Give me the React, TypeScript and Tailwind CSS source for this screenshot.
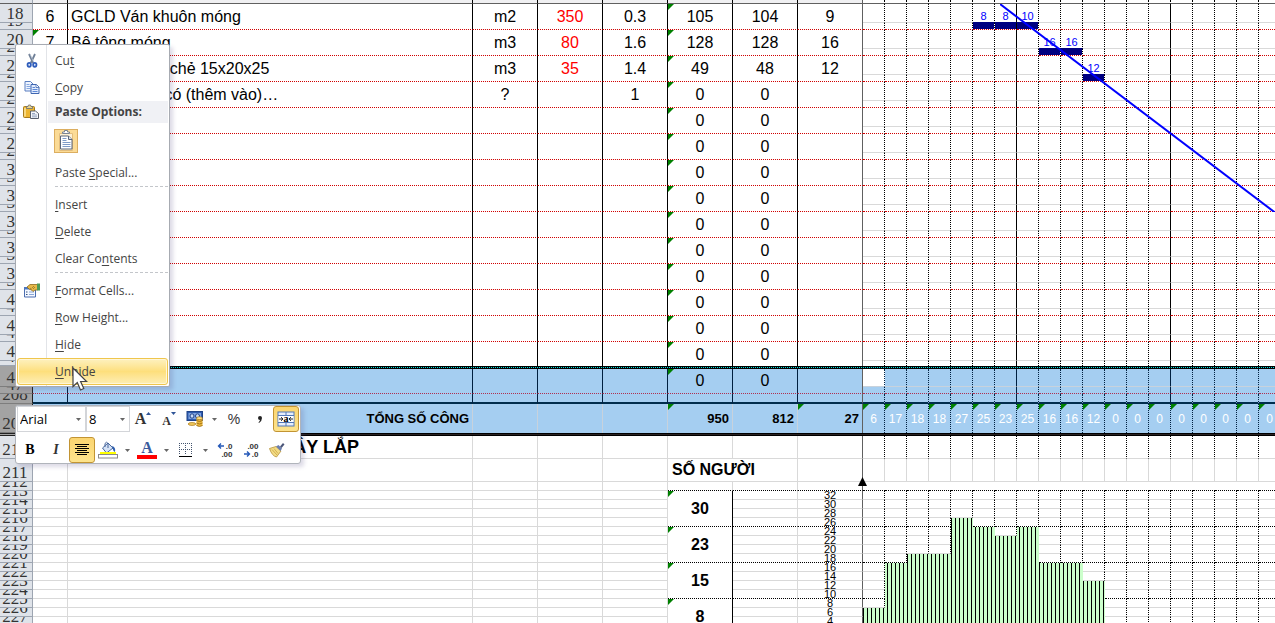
import { ReactNode } from 'react'
import { clsx } from 'clsx'

/* ── Sheet data ── */
type Task = {
  no?: string
  name?: string
  unit?: string
  qty?: string
  rate?: string
  total?: string
  actual?: string
  crew?: string
  start?: number
  bars?: string[]
}

const TASKS: Task[] = [
  { no: '6', name: 'GCLD Ván khuôn móng', unit: 'm2', qty: '350', rate: '0.3', total: '105', actual: '104', crew: '9', start: 5, bars: ['8', '8', '10'] },
  { no: '7', name: 'Bê tông móng', unit: 'm3', qty: '80', rate: '1.6', total: '128', actual: '128', crew: '16', start: 8, bars: ['16', '16'] },
  { no: '8', name: 'Xây móng đá chẻ 15x20x25', unit: 'm3', qty: '35', rate: '1.4', total: '49', actual: '48', crew: '12', start: 10, bars: ['12'] },
  { no: '9', name: 'Công việc gì có (thêm vào)…', unit: '?', rate: '1', total: '0', actual: '0' },
  ...Array.from({ length: 10 }, () => ({ total: '0', actual: '0' })),
]

const DAY_TOTALS = [6, 17, 18, 18, 27, 25, 23, 25, 16, 16, 12, 0, 0, 0, 0, 0, 0, 0, 0]
const DAYS = DAY_TOTALS.map((_, i) => i)

// first filled chart row for each day, counted from the top of the axis
const CHART_TOP = [13, 8, 7, 7, 3, 4, 5, 4, 8, 8, 10]
const CHART_MARKS = ['30', '23', '15', '8']
const CHART_ROWS = Array.from({ length: 16 }, (_, i) => i)

const isWeekEnd = (day: number) => day === 6 || day === 13

/* ── Grid parts ── */
const Corner = () => (
  <span className="absolute left-0 top-0 block size-0 border-r-6 border-t-6 border-r-transparent border-t-[#008000]" />
)

const RowHead = ({ n, h, selected }: { n: number | string; h: string; selected?: boolean }) => (
  <th
    scope="row"
    className={clsx(
      'border-b border-r p-0 font-["Liberation_Serif",serif] text-[17px] font-normal leading-[17px]',
      selected
        ? 'border-b-[#7d7d7d] border-r-[#222222] bg-[#a3a3a3] text-[#333333]'
        : 'border-b-[#9da5b1] border-r-[#9da5b1] bg-[#dfe3e9] text-[#333333]'
    )}
  >
    <div className={clsx('flex items-end justify-center overflow-hidden pr-0.5', h)}>{n}</div>
  </th>
)

const TaskCell = ({ children, className, corner }: { children?: ReactNode; className?: string; corner?: boolean }) => (
  <td rowSpan={2} className={clsx('relative border-r p-0 text-center text-base leading-5', className)}>
    {corner && <Corner />}
    {children}
  </td>
)

const TaskRows = ({ task, index }: { task: Task; index: number }) => {
  const last = index === TASKS.length - 1
  const line = clsx('border-r-black', last ? 'pt-0.5!' : 'border-b border-dotted border-b-[#d00000] [border-right-style:solid]')
  const start = task.start ?? 0
  const inBar = (day: number) => !!task.bars && day >= start && day < start + task.bars.length
  return (
    <>
      <tr className="h-[19px]">
        <RowHead n={18 + index * 2} h="h-[18px]" />
        <TaskCell className={line} corner={index === 1}>{task.no}</TaskCell>
        <TaskCell className={clsx(line, 'pl-[3px] text-left! whitespace-nowrap')}>{task.name}</TaskCell>
        <TaskCell className={line}>{task.unit}</TaskCell>
        <TaskCell className={clsx(line, 'text-[#ff0000]')}>{task.qty}</TaskCell>
        <TaskCell className={line}>{task.rate}</TaskCell>
        <TaskCell className={line} corner>{task.total}</TaskCell>
        <TaskCell className={line}>{task.actual}</TaskCell>
        <TaskCell className={clsx(line, 'border-r-[#606060]!')}>{task.crew}</TaskCell>
        {DAYS.map(day => (
          <td
            key={day}
            className={clsx(
              'border-b border-r border-r-black p-0 text-center align-bottom text-[11px] leading-3 text-[#0000ff]',
              !isWeekEnd(day) && '[border-right-style:dotted]',
              inBar(day) ? 'border-b-[#000080]' : 'border-b-[#d9d9d9]'
            )}
          >
            {inBar(day) && task.bars?.[day - start]}
          </td>
        ))}
      </tr>
      <tr className={last ? 'h-[5px]' : 'h-[7px]'}>
        <RowHead n={19 + index * 2} h={last ? 'h-[4px]' : 'h-[6px]'} />
        {DAYS.map(day => (
          <td
            key={day}
            className={clsx(
              'border-r border-r-black p-0',
              !isWeekEnd(day) && '[border-right-style:dotted]',
              !last && 'border-b border-b-[#d00000] [border-bottom-style:dotted]',
              inBar(day) && 'bg-[#000080] bg-clip-padding'
            )}
          />
        ))}
      </tr>
    </>
  )
}

const SelectedRows = () => {
  const cell = 'border-b border-dotted border-b-[#b03050] border-r-[#002040] [border-right-style:solid]'
  const dayLine = (day: number) => clsx('border-r border-r-[#002040] p-0', !isWeekEnd(day) && '[border-right-style:dotted]')
  return (
    <>
      <tr className="h-[18px] bg-[#a5cef1]">
        <RowHead n={46} h="h-[17px]" selected />
        <TaskCell className={cell} />
        <TaskCell className={cell} />
        <TaskCell className={cell} />
        <TaskCell className={cell} />
        <TaskCell className={cell} />
        <TaskCell className={cell} corner>0</TaskCell>
        <TaskCell className={cell}>0</TaskCell>
        <TaskCell className={clsx(cell, 'border-r-[#606060]!')} />
        {DAYS.map(day => (
          <td key={day} className={clsx(dayLine(day), 'border-b border-b-[#c8d2dc]', day === 0 && 'bg-white')} />
        ))}
      </tr>
      <tr className="h-[7px] bg-[#a5cef1]">
        <RowHead n={47} h="h-[6px]" selected />
        {DAYS.map(day => (
          <td key={day} className={clsx(dayLine(day), 'border-b border-b-[#b03050] [border-bottom-style:dotted]')} />
        ))}
      </tr>
      <tr className="h-[10px] bg-[#a5cef1]">
        <RowHead n={208} h="h-[9px]" selected />
        {Array.from({ length: 8 }, (_, i) => (
          <td key={i} className={clsx('border-b-2 border-r border-b-[#002d4d] p-0', i === 7 ? 'border-r-[#606060]' : 'border-r-[#002040]')} />
        ))}
        {DAYS.map(day => (
          <td key={day} className={clsx(dayLine(day), 'border-b-2 border-b-[#002d4d]')} />
        ))}
      </tr>
    </>
  )
}

const TotalsRow = () => {
  const cell = 'relative border-r border-r-[#c8d2dc] p-0 pr-[3px] text-right text-[13px] font-bold leading-4'
  return (
    <tr className="h-[29px] bg-[#a5cef1]">
      <RowHead n={209} h="h-[28px]" selected />
      <td className={cell} />
      <td className={cell}>TỔNG SỐ CÔNG</td>
      <td className={cell} />
      <td className={cell} />
      <td className={cell} />
      <td className={cell}><Corner />950</td>
      <td className={cell}>812</td>
      <td className={clsx(cell, 'border-r-[#606060]!')}><Corner />27</td>
      {DAY_TOTALS.map((total, day) => (
        <td key={day} className="relative border-r border-dotted border-r-[#002040] p-0 text-center text-xs text-white">
          <Corner />
          {total}
        </td>
      ))}
    </tr>
  )
}

const GRAY = 'border-b border-r border-[#d9d9d9] p-0'

const TitleRows = () => (
  <>
    <tr className="h-[23px]">
      <RowHead n={210} h="h-[22px]" />
      <td className={GRAY} />
      <td className={clsx(GRAY, 'pr-[113px] text-right text-lg font-bold leading-5')}>XÂY LẮP</td>
      {[0, 1, 2, 3, 4].map(i => <td key={i} className={GRAY} />)}
      <td className={clsx(GRAY, 'border-r-[#606060]')} />
      {DAYS.map(day => (
        <td key={day} className="border-b border-r border-b-[#d9d9d9] border-r-black p-0 [border-right-style:dotted]" />
      ))}
    </tr>
    <tr className="h-[23px]">
      <RowHead n={211} h="h-[22px]" />
      {[0, 1, 2, 3, 4].map(i => <td key={i} className={GRAY} />)}
      <td colSpan={2} className={clsx(GRAY, 'pl-1 text-base font-bold leading-5')}>SỐ NGƯỜI</td>
      <td className={clsx(GRAY, 'border-r-[#606060]')} />
      {DAYS.map(day => <td key={day} className={GRAY} />)}
    </tr>
    <tr className="h-[9px]">
      <RowHead n={212} h="h-[8px]" />
      {[0, 1, 2, 3, 4].map(i => <td key={i} className={GRAY} />)}
      {[5, 6, 7].map(i => (
        <td key={i} className={clsx('border-b border-r border-b-black p-0 [border-bottom-style:dotted]', i === 7 ? 'border-r-[#606060]' : 'border-r-[#d9d9d9]')} />
      ))}
      {DAYS.map(day => <td key={day} className="border-b border-dotted border-b-black p-0" />)}
    </tr>
  </>
)

const ChartRow = ({ row }: { row: number }) => {
  const marked = row % 4 === 3
  const base = marked ? 'border-b-black [border-bottom-style:dotted]' : 'border-b-[#d9d9d9]'
  return (
    <tr className="h-[9px]">
      <RowHead n={213 + row} h="h-[8px]" />
      {[0, 1, 2, 3, 4].map(i => <td key={i} className={GRAY} />)}
      {row % 4 === 0 && (
        <td rowSpan={4} className="relative border-b border-r border-dotted border-black p-0 text-center text-base font-bold leading-5 [border-right-style:solid]">
          <Corner />
          {CHART_MARKS[row / 4]}
        </td>
      )}
      <td className={clsx('border-b border-r border-r-[#d9d9d9] p-0', base)} />
      <td className={clsx('border-b border-r border-r-[#606060] p-0 text-center text-[11px] leading-2', base)}>
        <div className="h-2">{32 - row * 2}</div>
      </td>
      {DAYS.map(day => {
        const filled = row >= (CHART_TOP[day] ?? 99)
        return (
          <td
            key={day}
            className={clsx(
              'border-b border-r p-0',
              filled && 'border-transparent bg-origin-border',
              filled && day % 2 === 0 && 'bg-[repeating-linear-gradient(90deg,#000_0_1px,#ccffcc_1px_4px)]',
              filled && day % 2 === 1 && 'bg-[repeating-linear-gradient(90deg,#ccffcc_0_2px,#000_2px_3px,#ccffcc_3px_4px)]',
              !filled && 'border-r-black [border-right-style:dotted]',
              !filled && base
            )}
          />
        )
      })}
    </tr>
  )
}

const Sheet = () => (
  <table className="w-0 table-fixed border-separate border-spacing-0">
    <colgroup>
      <col className="w-[33px]" />
      <col className="w-[35px]" />
      <col className="w-[405px]" />
      {[0, 1, 2, 3, 4, 5].map(i => <col key={i} className="w-[65px]" />)}
      {DAYS.map(day => <col key={day} className="w-[22px]" />)}
    </colgroup>
    <thead>
      <tr className="h-1">
        <td className="border-b border-r border-b-[#606060] border-r-[#9da5b1] bg-[#dfe3e9] p-0" />
        {Array.from({ length: 8 }, (_, i) => (
          <td key={i} className={clsx('border-b border-r border-b-[#606060] bg-[#f0f0f2] p-0', i === 7 ? 'border-r-[#606060]' : 'border-r-black')} />
        ))}
        {DAYS.map(day => (
          <td key={day} className="border-b border-r border-b-[#606060] border-r-black p-0 [border-right-style:dotted]" />
        ))}
      </tr>
    </thead>
    <tbody>
      {TASKS.map((task, i) => <TaskRows key={i} task={task} index={i} />)}
      <tr className="h-[3px]">
        <td className="border-r border-[#222222] bg-[#a3a3a3] p-0" />
        <td colSpan={27} className="border-y border-black bg-[repeating-linear-gradient(90deg,#00e0e0_0_1px,#000_1px_2px)] p-0" />
      </tr>
      <SelectedRows />
      <TotalsRow />
      <tr className="h-[3px]">
        <td className="border-y border-[#222222] bg-[#a3a3a3] p-0" />
        <td colSpan={27} className="border-y border-black bg-[#2a2222] p-0" />
      </tr>
      <TitleRows />
      {CHART_ROWS.map(row => <ChartRow key={row} row={row} />)}
    </tbody>
  </table>
)

/* ── Icons ── */
const ScissorsIcon = () => (
  <svg viewBox="0 0 16 16" className="size-4">
    <path d="M5 1l4.200 9M11 1L6.800 10" stroke="#6f7f96" strokeWidth="1.800" fill="none" />
    <path d="M6 1l3.600 8" stroke="#b9c4d4" strokeWidth=".7" />
    <ellipse cx="5.200" cy="11.800" rx="1.700" ry="2" fill="#dfe8fa" stroke="#2f5dbb" strokeWidth="1.700" />
    <ellipse cx="10.800" cy="11.800" rx="1.700" ry="2" fill="#dfe8fa" stroke="#2f5dbb" strokeWidth="1.700" />
  </svg>
)

const CopyIcon = () => (
  <svg viewBox="0 0 16 16" className="size-4">
    <path d="M1 1.500h5.500L9 4v7H1z" fill="#eef4ff" stroke="#5b7fc0" />
    <path d="M2.500 4.500h3M2.500 6.500h4M2.500 8.500h4" stroke="#86a8e0" />
    <path d="M7 4.500h5.500L15 7v6.500H7z" fill="#e3edff" stroke="#3f66b0" />
    <path d="M12 4.500V7.500h3" fill="#fff" stroke="#3f66b0" strokeWidth=".8" />
    <path d="M8.500 7.500h2.500M8.500 9.500h5M8.500 11.500h5" stroke="#5f8ad6" />
  </svg>
)

const PasteIcon = () => (
  <svg viewBox="0 0 16 16" className="size-4">
    <rect x=".5" y="2.500" width="11" height="11" rx="1" fill="#edb52f" stroke="#a67a1c" />
    <path d="M2 4v8.500" stroke="#fbe49b" strokeWidth="1.500" />
    <path d="M3.500 4.500v-2h1.500l.5-1.500h2l.5 1.500h1.500v2z" fill="#e9d58c" stroke="#676d78" strokeWidth=".8" />
    <path d="M7.500 7h5l3 2.500v5h-8z" fill="#f3f6fb" stroke="#59606e" />
    <path d="M9 9.500h3M9 11h5M9 12.800h5" stroke="#7f93b5" strokeWidth=".8" />
  </svg>
)

const PasteAllIcon = () => (
  <svg viewBox="0 0 22 22" className="size-[22px]">
    <path d="M4.500 3.500h13v17h-13z" fill="#fdf0d2" stroke="#e3bd7c" />
    <path d="M7.500 3.500V2h2V.5h3V2h2v1.500z" fill="#fff" stroke="#7b8492" />
    <path d="M5.500 6h8l3.500 3.500v9.500H5.500z" fill="#fff" stroke="#596579" />
    <path d="M13.500 6v3.500H17" fill="#d8dfe9" stroke="#596579" />
    <path d="M7.500 8.500h4M7.500 10.500h4M7.500 12.500h8M7.500 14.500h8M7.500 16.500h8" stroke="#7f9cc8" />
  </svg>
)

const FormatCellsIcon = () => (
  <svg viewBox="0 0 16 16" className="size-4">
    <path d="M.5 5h11v9h-11z" fill="#f4f8ff" stroke="#4a6db0" />
    <path d="M0 4h12v2.500H0z" fill="#4d77bf" />
    <path d="M2 9h1.500M2 11.500h1.500" stroke="#33507f" />
    <path d="M5 9h5M5 11.500h5" stroke="#89a6d6" />
    <path d="M3 4l3-2.500h4l3.500 0v5.500h-2.500L9 8.500 7.500 7 5 6z" fill="#e8b94a" stroke="#8d6a1e" strokeWidth=".8" />
    <path d="M6 5l2 1.500M8 4l2 2M9 3l2 2" stroke="#8d6a1e" strokeWidth=".7" />
    <path d="M13 .5h3v7h-3z" fill="#4e9a57" />
  </svg>
)

const MoneyIcon = () => (
  <svg viewBox="0 0 18 18" className="size-[18px]">
    <rect x="1" y="1.500" width="15.500" height="9" fill="#2e5cb0" stroke="#1f4287" />
    <rect x="2.500" y="3" width="12.500" height="6" fill="#7fa3e0" />
    <ellipse cx="6" cy="6" rx="2" ry="2.200" fill="#c9dbf7" stroke="#1f4287" />
    <ellipse cx="11.500" cy="6" rx="2" ry="2.200" fill="#c9dbf7" stroke="#1f4287" />
    <path d="M10.500 8h6v8h-6z" fill="#eab83a" />
    <ellipse cx="13.500" cy="8.200" rx="3" ry="1.400" fill="#ffe48a" stroke="#a8761a" strokeWidth=".7" />
    <path d="M10.500 10.500q3 2 6 0M10.500 13q3 2 6 0M10.500 15.500q3 2 6 0" stroke="#a8761a" fill="none" />
    <ellipse cx="6" cy="14" rx="3.800" ry="1.400" fill="#f5cf62" stroke="#b07c1c" strokeWidth=".8" />
  </svg>
)

const MergeIcon = () => (
  <svg viewBox="0 0 18 16" className="h-4 w-[18px]">
    <rect x="1" y="1" width="16" height="14" fill="#e6eefb" stroke="#5278b8" />
    <path d="M1 4.500h16M1 11.500h16M9 1v3.500M9 11.500V15" stroke="#5278b8" />
    <rect x="1.500" y="5" width="15" height="6" fill="#fff" />
    <path d="M2 8h3.500M4 6.200L6 8l-2 1.800M16 8h-3.500M14 6.200L12 8l2 1.800" stroke="#222" fill="none" />
    <text x="9" y="10.500" textAnchor="middle" fontFamily="Liberation Serif" fontSize="10" fontWeight="bold">a</text>
  </svg>
)

const AlignCenterIcon = () => (
  <svg viewBox="0 0 14 12" className="h-3 w-3.5" stroke="#000">
    <path d="M0 .5h14M2 2.500h10M0 4.500h14M2 6.500h10M0 8.500h14M2 10.500h10" />
  </svg>
)

const BucketIcon = () => (
  <svg viewBox="0 0 20 18" className="h-[18px] w-5">
    <path d="M4.500 7L10 2l5 5-6.500 5z" fill="#d5e2f5" stroke="#48679c" />
    <path d="M7 6V2.500q1.500-2.500 3 0V7" stroke="#48679c" fill="none" />
    <path d="M14 5q4 1 3 6-2-1-2.500-4z" fill="#2f5fae" />
    <path d="M2 12h16" stroke="#ffff00" strokeWidth="2" />
    <rect x=".5" y="13.500" width="19" height="3.500" fill="#fff" stroke="#8a8a8a" />
  </svg>
)

const BordersIcon = () => (
  <svg viewBox="0 0 14 14" className="size-3.5" stroke="#44546e">
    <path d="M.5 0v12M6.500 0v12M12.500 0v12M0 .5h13M0 6.500h13" strokeDasharray="1 1" />
    <path d="M0 13.500h13" stroke="#000" />
  </svg>
)

const DecimalIcon = ({ more }: { more?: boolean }) => (
  <svg viewBox="0 0 16 16" className="size-4" fontFamily="Liberation Sans" fontSize="8" fontWeight="bold" fill="#333">
    <text x="15.500" y="7" textAnchor="end">{more ? '.0' : '.00'}</text>
    <text x="15.500" y="15" textAnchor="end">{more ? '.00' : '.0'}</text>
    {more
      ? <path d="M7 4H1.500M4 1.500L1.500 4 4 6.500" stroke="#2458b8" strokeWidth="1.400" fill="none" />
      : <path d="M1 12h5.500M4 9.500L6.500 12 4 14.500" stroke="#2458b8" strokeWidth="1.400" fill="none" />}
  </svg>
)

const BrushIcon = () => (
  <svg viewBox="0 0 16 16" className="size-4">
    <path d="M.5 6.500l6.500-2 5 4.500-4.500 6q-4.500-1-7-8.500z" fill="#f3dc86" stroke="#b59136" strokeWidth=".8" />
    <path d="M3 7.500l5 5.500M5 6.500l4 5" stroke="#c9a440" strokeWidth=".8" />
    <path d="M7 4.500L9.500 3l3.500 3.500-1.500 2.500z" fill="#6b7eae" />
    <path d="M11 4.500L14 1l1.500 1.500-3 3.500z" fill="#4a5578" />
  </svg>
)

/* ── Context menu ── */
const MenuItem = ({ children, icon, active }: { children: ReactNode; icon?: ReactNode; active?: boolean }) => (
  <button
    role="menuitem"
    className={clsx(
      'flex h-[27px] w-full items-center rounded-[3px] border text-left',
      active
        ? 'border-[#efc64c] bg-linear-to-b from-[#fdf1bf] via-[#fddf7c] to-[#fdeeb4] shadow-[inset_0_0_0_1px_#fff6d8]'
        : 'border-transparent'
    )}
  >
    <span className="flex w-7 shrink-0 justify-center">{icon}</span>
    <span className="pl-[9px]">{children}</span>
  </button>
)

const Separator = () => <div className="ml-[38px] h-[5px] border-t border-dashed border-[#c3c6ca]" />

const U = ({ children }: { children: string }) => (
  <span className="underline underline-offset-2">{children}</span>
)

const ContextMenu = () => (
  <div
    role="menu"
    className="absolute left-[15px] top-11 w-[155px] whitespace-nowrap rounded-xs border border-[#a7abb2] bg-white bg-[linear-gradient(90deg,transparent_30px,#e2e4e8_30px_31px,transparent_31px)] px-px pb-px pt-0.5 font-['Open_Sans',sans-serif] text-xs text-[#444444] shadow-[3px_3px_4px_rgba(80,70,130,0.2)]"
  >
    <MenuItem icon={<ScissorsIcon />}>Cu<U>t</U></MenuItem>
    <MenuItem icon={<CopyIcon />}><U>C</U>opy</MenuItem>
    <div className="flex h-[22px] items-center">
      <span className="flex w-7 shrink-0 justify-center"><PasteIcon /></span>
      <span className="ml-[3px] flex h-full grow items-center bg-[#f0f1f5] pl-[7px] font-bold">Paste Options:</span>
    </div>
    <div className="flex h-9 items-center pl-[37px]">
      <button aria-label="Paste" className="flex size-6 items-center justify-center border border-[#dcae60] bg-[#fbdb96]">
        <PasteAllIcon />
      </button>
    </div>
    <MenuItem>Paste <U>S</U>pecial...</MenuItem>
    <Separator />
    <MenuItem><U>I</U>nsert</MenuItem>
    <MenuItem><U>D</U>elete</MenuItem>
    <MenuItem>Clear Co<U>n</U>tents</MenuItem>
    <Separator />
    <MenuItem icon={<FormatCellsIcon />}><U>F</U>ormat Cells...</MenuItem>
    <MenuItem><U>R</U>ow Height...</MenuItem>
    <MenuItem><U>H</U>ide</MenuItem>
    <MenuItem active><U>U</U>nhide</MenuItem>
  </div>
)

/* ── Mini toolbar ── */
const Caret = () => (
  <svg viewBox="0 0 5 3" className="h-[3px] w-[5px]"><path d="M0 0h5L2.500 3z" fill="#666" /></svg>
)

const Tool = ({ label, children, active }: { label: string; children: ReactNode; active?: boolean }) => (
  <button
    aria-label={label}
    className={clsx(
      'flex size-[26px] items-center justify-center rounded-[3px]',
      active && 'border border-[#c29433] bg-linear-to-b from-[#fbd570] to-[#fde38c]'
    )}
  >
    {children}
  </button>
)

const DropTool = ({ label, children }: { label: string; children: ReactNode }) => (
  <>
    <Tool label={label}>{children}</Tool>
    <button aria-label={`${label} options`} className="flex h-[26px] w-[13px] items-center justify-center">
      <Caret />
    </button>
  </>
)

const ToolSelect = ({ label, value, className }: { label: string; value: string; className: string }) => (
  <div className={clsx('relative h-[26px]', className)}>
    <select
      aria-label={label}
      className="size-full appearance-none border border-[#d3d5d9] bg-white pl-0.5 font-['Open_Sans',sans-serif] text-[13px] leading-4 text-black"
    >
      <option>{value}</option>
    </select>
    <span className="pointer-events-none absolute right-[5px] top-3"><Caret /></span>
  </div>
)

const MiniToolbar = () => (
  <div
    role="toolbar"
    className="absolute left-[15px] top-[405px] flex w-[286px] flex-col gap-[5px] rounded-[3px] border border-[#b0b4bb] bg-white pl-px font-['Liberation_Serif',serif] text-[#333333] shadow-[3px_3px_4px_rgba(80,70,130,0.2)]"
  >
    <div className="flex">
      <ToolSelect label="Font" value="Arial" className="w-[69px]" />
      <ToolSelect label="Font size" value="8" className="w-11" />
      <Tool label="Grow font">
        <span className="text-base font-bold leading-5">A</span>
        <svg viewBox="0 0 5 3" className="mb-3 h-[3px] w-[5px]"><path d="M0 3h5L2.500 0z" fill="#2f5597" /></svg>
      </Tool>
      <Tool label="Shrink font">
        <span className="pt-1 text-xs font-bold leading-4">A</span>
        <svg viewBox="0 0 5 3" className="mb-3 h-[3px] w-[5px]"><path d="M0 0h5L2.500 3z" fill="#2f5597" /></svg>
      </Tool>
      <DropTool label="Accounting format"><MoneyIcon /></DropTool>
      <Tool label="Percent"><span className="font-['Liberation_Sans',sans-serif] text-sm">%</span></Tool>
      <Tool label="Comma style">
        <svg viewBox="0 0 4 7" className="h-[7px] w-1"><path d="M2 0a2 2 0 0 1 2 2q0 3-3 5l-.5-.6Q2 5 2 4A2 2 0 0 1 2 0z" fill="#222" /></svg>
      </Tool>
      <Tool label="Merge and center" active><MergeIcon /></Tool>
    </div>
    <div className="flex">
      <Tool label="Bold"><span className="text-sm font-bold text-black">B</span></Tool>
      <Tool label="Italic"><span className="text-sm font-bold italic">I</span></Tool>
      <Tool label="Center" active><AlignCenterIcon /></Tool>
      <DropTool label="Fill color"><BucketIcon /></DropTool>
      <DropTool label="Font color">
        <span className="flex w-5 flex-col items-center border-b-4 border-[#ff0000] text-base font-bold leading-[14px] text-[#3a5a9c]">A</span>
      </DropTool>
      <DropTool label="Borders"><BordersIcon /></DropTool>
      <Tool label="Increase decimal"><DecimalIcon more /></Tool>
      <Tool label="Decrease decimal"><DecimalIcon /></Tool>
      <Tool label="Format painter"><BrushIcon /></Tool>
    </div>
  </div>
)

/* ── Main export ── */
export default function App() {
  return (
    <main className="relative h-screen overflow-hidden bg-white font-['Liberation_Sans',Arial,sans-serif] text-black">
      <Sheet />

      {/* planned progress line */}
      <svg viewBox="0 0 275 208" className="absolute left-[1000px] top-1 h-[208px] w-[275px]">
        <path d="M0 0L275 208.500" stroke="#0000ff" strokeWidth="2" />
      </svg>
      {/* axis arrow */}
      <svg viewBox="0 0 9 9" className="absolute left-[858px] top-[477px] size-[9px]">
        <path d="M4.500 0L9 9H0z" fill="#000" />
      </svg>

      <ContextMenu />
      <MiniToolbar />

      {/* pointer */}
      <svg viewBox="0 0 16 24" className="absolute left-[72px] top-[367px] h-6 w-4">
        <path d="M1 1v18.500l4.300-4 3.200 7.500 3.300-1.500-3.200-7h6z" fill="#fff" stroke="#444" strokeWidth="1.200" />
      </svg>
    </main>
  )
}
